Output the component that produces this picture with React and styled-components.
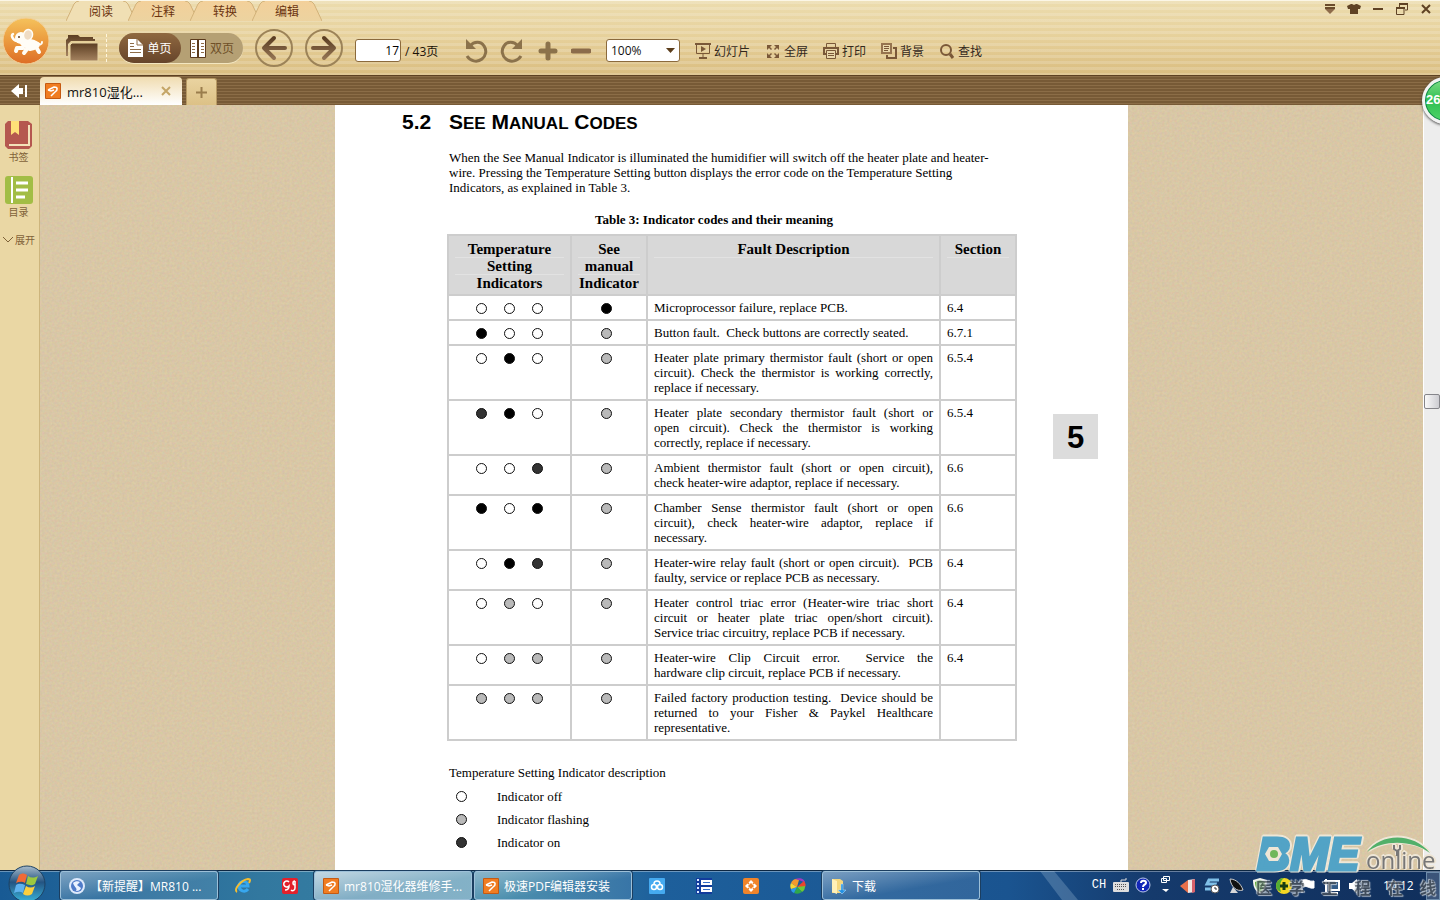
import React from 'react';
import styled, { createGlobalStyle, css } from 'styled-components';

const uiFont = '"Open Sans", "Noto Sans CJK SC", sans-serif';

const GlobalStyle = createGlobalStyle`
  * { box-sizing: border-box; }
  body { margin: 0; font-family: ${uiFont}; font-size: 12px; }
  button { border: 0; padding: 0; background: none; font: inherit; color: inherit; cursor: pointer; }
  svg { display: block; flex: none; }
  p, h1, h2, ul { margin: 0; padding: 0; }
`;

const Window = styled.div`
  position: relative;
  display: flex;
  flex-direction: column;
  height: 100vh;
  overflow: hidden;
`;

/* ---------- top toolbar ---------- */

const Header = styled.header`
  display: flex;
  flex: none;
  height: 75px;
  border-top: 1px solid #fbf6e6;
  background:
    repeating-linear-gradient(rgba(255, 255, 255, 0.16) 0 3px, transparent 3px 6px),
    linear-gradient(#ecdcae, #e6d09a 50%, #dabd80);
`;

const LogoButton = styled.button`
  display: flex;
  justify-content: center;
  align-items: center;
  width: 52px;
  height: 80px;
`;

const HeaderMain = styled.div`
  display: flex;
  flex: 1;
  flex-direction: column;
  padding-left: 14px;
`;

const MenuRow = styled.div`
  display: flex;
  justify-content: space-between;
  height: 20px;
`;

const MenuTabs = styled.nav`
  display: flex;
`;

const MenuTab = styled.button`
  display: grid;
  place-items: center;
  width: 70px;
  height: 20px;
  margin-right: -8px;
  color: #6b3410;

  > * { grid-area: 1 / 1; }
`;

const WindowButtons = styled.div`
  display: flex;
  align-items: center;
  gap: 8px;
  height: 16px;
  padding-right: 6px;

  button { display: grid; place-items: center; width: 16px; }
`;

const ToolRow = styled.div`
  display: flex;
  align-items: center;
  gap: 12px;
  height: 54px;
`;

const OpenButton = styled.button`
  width: 41px;
  height: 28px;
  border-right: 1px dashed #fff6dc;
`;

const ModeSwitch = styled.div`
  display: flex;
  width: 124px;
  height: 30px;
  border-radius: 15px;
  background: #b5a074;
  box-shadow: 0 1px 0 #f3e6c0;
`;

const ModeButton = styled.button`
  display: flex;
  align-items: center;
  justify-content: center;
  gap: 4px;
  width: 62px;
  border-radius: 15px;
  color: #6f5028;

  ${(p) => p.$active && css`
    color: #fff;
    background: linear-gradient(#8f6840, #66442a);
  `}
`;

const RoundButton = styled.button`
  display: grid;
  place-items: center;
  width: 38px;
  height: 38px;
  border: 2px solid #9c8358;
  border-radius: 50%;
`;

const ToolGroup = styled.div`
  display: flex;
  align-items: center;
  gap: 15px;
  padding-top: 5px;
`;

const PageField = styled.label`
  display: flex;
  align-items: center;
  gap: 4px;
  width: 95px;
  color: #1b1208;
  white-space: nowrap;

  input {
    width: 46px;
    height: 23px;
    padding: 0 1px;
    border: 1px solid #8b6a3c;
    border-radius: 3px;
    font: 12px ${uiFont};
    text-align: right;
  }
`;

const IconPair = styled.div`
  display: flex;
  gap: ${(p) => p.$gap}px;
`;

const ZoomField = styled.label`
  display: grid;
  align-items: center;
  width: 74px;

  > * { grid-area: 1 / 1; }

  select {
    height: 23px;
    padding: 0 4px;
    appearance: none;
    border: 1px solid #8b6a3c;
    border-radius: 3px;
    background: #fff;
    color: #111;
    font: 12px ${uiFont};
  }

  svg { justify-self: end; margin-right: 5px; pointer-events: none; }
`;

const ActionButton = styled.button`
  display: flex;
  align-items: center;
  gap: 3px;
  color: #33281c;
  white-space: nowrap;
`;

/* ---------- document tabs ---------- */

const TabBar = styled.div`
  display: flex;
  flex: none;
  align-items: flex-end;
  height: 30px;
  border-top: 1px solid #5d4122;
  background: repeating-linear-gradient(#8b6d47 0 1px, #775a36 1px 3px);
`;

const CollapseButton = styled.button`
  display: grid;
  place-items: center;
  width: 40px;
  height: 29px;
`;

const DocTab = styled.div`
  display: flex;
  align-items: center;
  gap: 6px;
  width: 142px;
  height: 28px;
  padding: 0 11px 0 5px;
  border-radius: 4px 4px 0 0;
  background: linear-gradient(#f0dcb0, #fff);
  color: #111;
  font-size: 13px;

  span { flex: 1; white-space: nowrap; }
`;

const NewTab = styled.button`
  display: grid;
  place-items: center;
  width: 31px;
  height: 27px;
  margin-left: 4px;
  border: 1px solid #b89a64;
  border-bottom: 0;
  border-radius: 3px 3px 0 0;
  background: linear-gradient(#e9d3a0, #dcc186);
`;

/* ---------- body ---------- */

const Body = styled.div`
  display: flex;
  flex: 1;
  min-height: 0;
`;

const Sidebar = styled.aside`
  display: flex;
  flex: none;
  flex-direction: column;
  align-items: center;
  gap: 10px;
  width: 40px;
  padding: 16px 2px 0 0;
  border-right: 1px solid #cdb57d;
  background: #ead7a4;
`;

const SideButton = styled.button`
  display: flex;
  flex-direction: column;
  align-items: center;
  height: 45px;
  color: #7f6238;
  font-size: 10px;
  line-height: 14px;
`;

const ExpandButton = styled.button`
  display: flex;
  align-items: center;
  gap: 1px;
  color: #7f6238;
  font-size: 10px;
  line-height: 18px;
  white-space: nowrap;
`;

const Canvas = styled.main`
  display: grid;
  grid-template-rows: 100%;
  justify-items: center;
  flex: 1;
  min-width: 0;
  overflow: hidden;
  background: #d9c8a5;

  > * { grid-area: 1 / 1; }
`;

const Paper = styled.article`
  display: flex;
  justify-content: space-between;
  width: 100%;
  max-width: 793px;
  padding: 5px 30px 0 67px;
  background: #fff;
  color: #000;
  font: 13px/15px "Liberation Serif", serif;
`;

const Section = styled.section`
  display: grid;
  grid-template-columns: 47px 567px;
  align-content: start;

  > * { grid-column: 2; }
`;

const Heading = styled.h1`
  display: grid;
  grid-column: 1 / -1;
  grid-template-columns: subgrid;
  font: bold 21px/24px "Liberation Sans", sans-serif;

  small { font-size: 17px; }
`;

const Intro = styled.p`
  margin-top: 14px;
  white-space: pre-line;
`;

const FaultTable = styled.table`
  width: 568px;
  margin-left: -2px;
  border-collapse: collapse;
  table-layout: fixed;

  caption {
    padding: 17px 36px 6px 0;
    font-weight: bold;
    line-height: 16px;
  }

  th {
    padding: 5px 6px 2px;
    border: 2px solid #cdcdcd;
    background: #d8d8d8;
    font-size: 15px;
    line-height: 17px;
    vertical-align: top;
  }

  th span {
    display: block;
    box-shadow: inset 0 -1px #e2e2e2;
  }

  td {
    padding: 4px 6px;
    border: 2px solid #cdcdcd;
    vertical-align: top;
  }
`;

const Line = styled.span`
  display: block;
  white-space: pre-wrap;
  text-align-last: ${(p) => (p.$last ? 'left' : 'justify')};
`;

const Lamps = styled.div`
  display: flex;
  justify-content: center;
  gap: 17px;
  padding: 3px ${(p) => (p.$single ? 5 : 0)}px 0 0;
`;

const lampColors = { off: '#fff', flash: '#b9b9b9', on: '#000', dark: '#333' };

const Lamp = styled.i`
  flex: none;
  width: 11px;
  height: 11px;
  border: 1px solid #111;
  border-radius: 50%;
  background: ${(p) => lampColors[p.$state]};
`;

const LegendTitle = styled.p`
  margin-top: 24px;
`;

const Legend = styled.ul`
  margin-top: 5px;
  list-style: none;

  li {
    display: flex;
    align-items: center;
    gap: 30px;
    height: 23px;
    padding-left: 7px;
  }
`;

const Chapter = styled.div`
  width: 45px;
  height: 45px;
  margin-top: 304px;
  background: #dcdcdc;
  font: bold 31px/48px "Liberation Sans", sans-serif;
  text-align: center;
`;

const ScrollTrack = styled.div`
  flex: none;
  width: 17px;
  padding-top: 289px;
  border-left: 1px solid #fff;
  background: #ededed;
`;

const ScrollThumb = styled.div`
  height: 15px;
  border: 1px solid #85858a;
  border-radius: 2px;
  background: linear-gradient(90deg, #fafafa, #cdcdd2);
`;

const FloatBadge = styled.div`
  position: absolute;
  top: 77px;
  right: -29px;
  width: 47px;
  height: 47px;
  border: 3px solid #f3f3f3;
  border-radius: 50%;
  background: linear-gradient(#7ddc84, #2fbf52 50%, #4fd468);
  box-shadow: inset 0 0 0 1px #12824a, 0 1px 3px #444;
  color: #fff;
  font: bold 13px/40px "Liberation Sans", sans-serif;
  text-indent: 1px;
`;

/* ---------- taskbar ---------- */

const Taskbar = styled.footer`
  display: flex;
  flex: none;
  gap: 2px;
  height: 30px;
  border-top: 1px solid #0d2742;
  background:
    linear-gradient(rgba(255, 255, 255, 0.35) 0 1px, transparent 1px),
    linear-gradient(90deg, #185a94, #32789f 18%, #3883a5 35%, #1d5f9b 46%, #1a5490 70%, #153a6c 80%, #102f5c);
`;

const StartButton = styled.button`
  display: grid;
  place-items: center;
  width: 58px;
  padding-right: 4px;
`;

const TaskButton = styled.button`
  display: flex;
  align-items: center;
  gap: 5px;
  width: 158px;
  height: 29px;
  padding: 0 8px;
  overflow: hidden;
  border: 1px solid #9dc0d8;
  border-radius: 3px;
  background: linear-gradient(170deg, rgba(255, 255, 255, ${(p) => (p.$active ? 0.7 : 0.42)}), rgba(255, 255, 255, ${(p) => (p.$active ? 0.38 : 0.1)}) 60%);
  box-shadow: 0 0 0 1px #1b3e60;
  color: #fff;
  white-space: nowrap;
`;

const QuickButton = styled.button`
  display: grid;
  place-items: center;
  width: 45px;
`;

const Tray = styled.div`
  display: flex;
  align-items: center;
  margin-left: auto;
  color: #fff;

  button { display: grid; place-items: center; width: 24px; }
`;

const Glare = styled.svg`
  margin-right: 8px;
`;

const LanguageBar = styled.div`
  display: flex;
  align-items: center;
  padding: 0 0 2px;
  font-family: "Liberation Mono", monospace;

  button { width: 22px; }
`;

const Clock = styled.time`
  width: 58px;
  padding-left: 15px;
`;

const ShowDesktop = styled.button`
  && { width: 14px; height: 28px; border: 1px solid #6d8cab; background: rgba(255, 255, 255, 0.18); }
`;

const Watermark = styled.div`
  position: absolute;
  right: 4px;
  bottom: 2px;
  width: 180px;
  pointer-events: none;
`;

const Brand = styled.div`
  display: flex;
  align-items: flex-end;
  height: 40px;
  filter: drop-shadow(1px 1px 0 #eee6d6) drop-shadow(-1px -1px 0 #eee6d6) drop-shadow(1px -1px 0 #eee6d6);

  svg { overflow: visible; }
`;

const BrandText = styled.div`
  display: flex;
  justify-content: space-between;
  color: #4b535b;
  font: bold 16px/22px "Noto Sans CJK SC", sans-serif;
  text-shadow: 0 0 1px #cfd6dc, 1px 1px 1px #cfd6dc, -1px -1px 1px #cfd6dc;
  opacity: 0.8;
`;

/* ---------- icons ---------- */

const ElephantLogo = () => (
  <svg width="48" height="48" viewBox="0 0 48 48">
    <defs>
      <linearGradient id="orb" x1="0" y1="0" x2="0" y2="1">
        <stop offset="0" stopColor="#f5c25c" />
        <stop offset=".5" stopColor="#eb9a3e" />
        <stop offset="1" stopColor="#dd6d26" />
      </linearGradient>
    </defs>
    <circle cx="24" cy="24" r="23" fill="url(#orb)" stroke="#f2cf96" />
    <g fill="none" stroke="#fffdf7" strokeLinecap="round" strokeLinejoin="round">
      <path d="M11 17c-2 1-1 6 4 7" strokeWidth="2.5" />
      <path d="M21 31l-6 0-1 3M25 32l-3 4M34 30l3 5M32 31l-4 1" strokeWidth="4" />
      <path d="M36 26c2 2 4 2 4-1" strokeWidth="2" />
    </g>
    <ellipse cx="19" cy="21" rx="6" ry="6" fill="#fffdf7" />
    <ellipse cx="28" cy="27" rx="10" ry="5" fill="#fffdf7" transform="rotate(8 28 27)" />
    <ellipse cx="26" cy="18" rx="4.5" ry="5.5" fill="#efdcc4" stroke="#fffdf7" strokeWidth="1.5" transform="rotate(15 26 18)" />
    <circle cx="17" cy="20" r="1" fill="#684020" />
  </svg>
);

const FolderIcon = () => (
  <svg width="33" height="28" viewBox="0 0 33 28">
    <defs>
      <linearGradient id="folder" x1="0" y1="0" x2="0" y2="1">
        <stop offset="0" stopColor="#5b3d22" />
        <stop offset="1" stopColor="#a58360" />
      </linearGradient>
    </defs>
    <path d="M0 22V6l2-2V1h10l2 2h13v2h2v2H5L2 10v12z" fill="url(#folder)" />
    <path d="M4 11l2-2h26v18H4z" fill="url(#folder)" stroke="#e8d4a2" />
  </svg>
);

const SinglePageIcon = () => (
  <svg width="15" height="18" viewBox="0 0 15 18">
    <path d="M0 0h9l6 6v12H0z" fill="#fff" />
    <path d="M9 0v6h6M2 4.5h4M2 7.5h4M2 10.5h11M2 13.5h11" fill="none" stroke="#8f6d48" />
  </svg>
);

const DoublePageIcon = () => (
  <svg width="16" height="19" viewBox="0 0 16 19">
    <path d="M.5.5h15v18H.5z" fill="#fff" stroke="#5b3a1c" />
    <path d="M8 0v19" stroke="#5b3a1c" strokeWidth="2" />
    <path d="M2 4.5h3M2 7.5h3M2 10.5h3M2 13.5h3M11 4.5h3M11 7.5h3M11 10.5h3M11 13.5h3" stroke="#8f6d48" />
  </svg>
);

const ArrowIcon = ({ flip }) => (
  <svg width="26" height="26" viewBox="0 0 26 26">
    <defs>
      <linearGradient id="arrow" gradientUnits="userSpaceOnUse" x1="0" y1="0" x2="0" y2="26">
        <stop offset="0" stopColor="#54371d" />
        <stop offset="1" stopColor="#9a7a58" />
      </linearGradient>
    </defs>
    <path d="M13 3L3 13l10 10M4 13h20" fill="none" stroke="url(#arrow)" strokeWidth="4" strokeLinecap="round" strokeLinejoin="round" transform={flip ? 'matrix(-1 0 0 1 26 0)' : undefined} />
  </svg>
);

const RotateIcon = ({ flip }) => (
  <svg width="24" height="24" viewBox="0 0 24 24">
    <g transform={flip ? 'matrix(-1 0 0 1 24 0)' : undefined} fill="none" stroke="#8b724b">
      <path d="M5 7c4-5 11-5 14 0 3 4 2 10-2 13-5 4-12 2-15-3" strokeWidth="3" />
      <path d="M1 0v10h10z" fill="#8b724b" stroke="none" />
    </g>
  </svg>
);

const PlusIcon = () => (
  <svg width="20" height="20" viewBox="0 0 20 20">
    <path d="M10 3v14M3 10h14" stroke="#8b724b" strokeWidth="5" strokeLinecap="round" />
  </svg>
);

const MinusIcon = () => (
  <svg width="20" height="20" viewBox="0 0 20 20">
    <path d="M2 10h16" stroke="#8b6c4b" strokeWidth="5" strokeLinecap="round" />
  </svg>
);

const actionIcons = {
  slides: (
    <g>
      <path d="M0 1h16" stroke="#7a5838" strokeWidth="2" />
      <path d="M1.5 2v8.5h13V2M8 11v4" fill="none" stroke="#7a5838" />
      <path d="M6 3l5 3-5 3z M4 14h8v2H4z" fill="#7a5838" />
    </g>
  ),
  full: (
    <g fill="#7a5838">
      <path d="M2 2h5L5 4l2 2-1 1-2-2-2 2zM14 2v5l-2-2-2 2-1-1 2-2-2-2zM14 15H9l2-2-2-2 1-1 2 2 2-2zM2 15v-5l2 2 2-2 1 1-2 2 2 2z" />
    </g>
  ),
  print: (
    <g fill="none" stroke="#7a5838">
      <path d="M3.5 4V.5h9V4" />
      <path d="M4 11H1V5h14v6h-3" strokeWidth="2" />
      <path d="M3.5 7.5h9v8h-9zM5 10.5h6M5 12.5h6" fill="#ead8ab" />
    </g>
  ),
  background: (
    <g fill="none" stroke="#7a5838">
      <path d="M12 5h3v10H6v-3" strokeWidth="2" />
      <path d="M1 1h9v9H1z" stroke="#96744f" strokeWidth="2" fill="#ead8ab" />
      <path d="M3 3.5h5M3 5.5h5M3 7.5h4" />
    </g>
  ),
  find: (
    <g fill="none" stroke="#7a5838">
      <circle cx="7" cy="7" r="5" strokeWidth="2" />
      <path d="M11 11l3 4" strokeWidth="3" />
    </g>
  ),
};

const PdfIcon = () => (
  <svg width="16" height="16" viewBox="0 0 16 16">
    <rect width="16" height="16" rx="1" fill="#c55a12" />
    <rect x="1" y="1" width="14" height="14" fill="#f07d22" />
    <path d="M3 7l6-3c4 0 4 3 1 5l-4 4M3 7l3 1 3-1" fill="none" stroke="#fff" strokeWidth="1.5" />
  </svg>
);

const WindowsOrb = () => (
  <svg width="36" height="30" viewBox="0 0 36 30" overflow="visible">
    <defs>
      <linearGradient id="start" x1="0" y1="0" x2="0" y2="1">
        <stop offset="0" stopColor="#a9bccb" />
        <stop offset=".45" stopColor="#245482" />
        <stop offset="1" stopColor="#39b3da" />
      </linearGradient>
    </defs>
    <circle cx="18" cy="13" r="18" fill="url(#start)" stroke="#1d4263" />
    <path d="M10 4c3-2 5-2 8 0l-2 8c-3-2-6-1-9 0z" fill="#f06a35" />
    <path d="M19 5c3 2 6 2 10 0l-3 8c-3 2-6 1-9 0z" fill="#9cc83f" />
    <path d="M7 14c3-2 6-1 9 0l-2 8c-3-2-6-1-9 0z" fill="#5fb2ef" />
    <path d="M17 15c3 2 6 2 9 0l-3 8c-3 2-6 2-9 0z" fill="#fbcf3e" />
  </svg>
);

const appIcons = {
  sync: (
    <g>
      <circle cx="8" cy="8" r="8" fill="#dde9fb" />
      <circle cx="8" cy="8" r="6" fill="#4f7bc9" />
      <path d="M4 5c2-2 5-2 7-1L8 7l4 3c-1 3-4 3-5 3 2-3-2-4-3-8z" fill="#eaf2ff" />
    </g>
  ),
  explorer: (
    <g fill="none">
      <path d="M13 11c-3 4-9 2-9-3 0-6 9-6 9 0H5" stroke="#37a7ee" strokeWidth="3" />
      <path d="M2 14C-2 12 6 2 13 1c3 0 2 2 1 4" stroke="#f3bd32" strokeWidth="2" />
    </g>
  ),
  music: (
    <g>
      <rect width="16" height="16" rx="2" fill="#e3202b" />
      <path d="M7 4a3 3 0 1 0 0 4c0 3-1 4-4 4M13 3a2 2 0 1 0 0 4M13 3v7c0 3-3 3-4 2" fill="none" stroke="#fff" strokeWidth="1.5" />
    </g>
  ),
  cloud: (
    <g>
      <rect width="16" height="16" rx="1" fill="#45aaf0" />
      <g fill="none" stroke="#fff" strokeWidth="1.5">
        <path d="M5 6a3 3 0 0 1 6 0" /><circle cx="5" cy="9" r="2.5" /><circle cx="11" cy="9" r="2.5" />
      </g>
    </g>
  ),
  film: (
    <g>
      <path d="M0 0h16v16H0z" fill="#123c9c" />
      <path d="M5 2h11v5H5zM5 9h11v5H5z" fill="#fff" />
      <path d="M2 1v14" stroke="#d7e7ff" strokeWidth="2" strokeDasharray="2 2" />
      <path d="M7 4.5h7M7 11.5h7" stroke="#356ec7" />
    </g>
  ),
  flow: (
    <g>
      <rect width="16" height="16" rx="2" fill="#f0842a" />
      <path d="M8 2l6 6-6 6-6-6z" fill="#fff" />
      <path d="M8 5l3 3-3 3-3-3z" fill="#f0842a" />
      <path d="M4 4l2 2M12 4l-2 2M12 12l-2-2M4 12l2-2" stroke="#f0842a" strokeWidth="1.5" />
    </g>
  ),
  ball: (
    <g>
      <path d="M7 9L1 5c2-4 5-5 8-3z" fill="#f49a2c" />
      <path d="M5 1c5-2 10 0 10 4-2-2-6-3-10-4z" fill="#a03ac2" />
      <path d="M7 9l7-6c2 3 2 5 1 6z" fill="#e9452d" />
      <path d="M7 9l8-1c0 3-1 5-3 6z" fill="#6fc736" />
      <path d="M7 9l5 5c-3 2-5 2-8 1z" fill="#2fa84a" />
      <path d="M7 9l-3 6c-2-1-3-2-3-4z" fill="#2a9be8" />
      <path d="M7 9l-6 2c-1-2-1-4 0-6z" fill="#f8d532" />
    </g>
  ),
  downloads: (
    <g>
      <path d="M1 1h8l3 2v12H1z" fill="#f4d77e" />
      <path d="M1 1l5 2v13l-5-2z" fill="#fff0b8" />
      <path d="M10 6v6H7l4 4 4-4h-3V6z" fill="#2592e4" stroke="#bfe2fa" strokeWidth=".5" />
    </g>
  ),
  keyboard: (
    <g>
      <path d="M8 5V3h5V1" fill="none" stroke="#ddd" />
      <rect y="5" width="16" height="10" rx="1" fill="#dedede" />
      <path d="M2 7.5h12M2 9.5h12M4 12.5h8" stroke="#555" strokeDasharray="1 1" />
    </g>
  ),
  help: (
    <g>
      <circle cx="8" cy="8" r="7" fill="#1226b8" stroke="#b9c7e6" />
      <path d="M6 6c0-3 5-3 5 0 0 2-3 1-3 4M8 11v2" fill="none" stroke="#fff" strokeWidth="2" />
    </g>
  ),
  restore: (
    <g>
      <path d="M6.5-.5h6v4h-6zM4.5 1.5h5v4h-5z" fill="#174070" stroke="#fff" />
      <path d="M5 12h7l-3 3z" fill="#fff" />
    </g>
  ),
  eraser: (
    <g>
      <path d="M0 8l8-6v13z" fill="#e8704b" />
      <path d="M8 2l7-1v13l-7 1z" fill="#f3e6e2" />
      <path d="M12 2l3-1v13l-3 1z" fill="#d6616b" />
    </g>
  ),
  scheduler: (
    <g fill="none">
      <path d="M15 2H5L3 6h8l-2 5H1" stroke="#7fc0e8" strokeWidth="3" />
      <circle cx="11" cy="11" r="4" fill="#fff" stroke="#555" />
      <path d="M11 9v2h2" stroke="#333" />
    </g>
  ),
  satellite: (
    <g>
      <path d="M2 1c6 0 11 5 13 11-6 2-12-3-13-11z" fill="#111" stroke="#ccc" />
      <path d="M5 9l-3 6h8z" fill="#d9d9d9" />
    </g>
  ),
  shield: (
    <g>
      <path d="M8 0l7 2c0 7-2 11-7 14C3 13 1 9 1 2z" fill="#f4f7ee" />
      <path d="M8 2l5 2c0 5-2 8-5 10-3-2-5-5-5-10z" fill="#55a82e" />
    </g>
  ),
  guard: (
    <g>
      <circle cx="8" cy="8" r="8" fill="#f4d722" />
      <path d="M0 8a8 8 0 0 1 8-8c-4 3-5 8-3 14-3-1-5-3-5-6z" fill="#54ae35" />
      <path d="M8 4v8M4 8h8" stroke="#173c12" strokeWidth="3" />
    </g>
  ),
  flag: (
    <path d="M2 1v14M3 2c4-2 5 2 11 1v7c-5 1-7-3-11-1z" fill="#fff" stroke="#fff" />
  ),
  network: (
    <g>
      <path d="M5 3h10v9H5z" fill="#315a86" stroke="#fff" strokeWidth="2" />
      <path d="M2 1v13M0 3h4M7 15h7" stroke="#fff" strokeWidth="2" />
    </g>
  ),
  sound: (
    <g>
      <path d="M1 5h3l5-4v14l-5-4H1z" fill="#fff" />
      <path d="M11 5c2 2 2 4 0 6M13 3c3 3 3 7 0 10" fill="none" stroke="#d0dcea" />
    </g>
  ),
};

const Icon = ({ children }) => (
  <svg width="16" height="16" viewBox="0 0 16 16" overflow="visible">{children}</svg>
);

const TabShape = ({ active }) => (
  <svg width="70" height="20" viewBox="0 0 70 20">
    <defs>
      <linearGradient id="tab" x1="0" y1="0" x2="0" y2="1">
        <stop offset="0" stopColor="#f3d09a" />
        <stop offset="1" stopColor="#ecd3a0" />
      </linearGradient>
    </defs>
    <path d="M0 20L8 3q2-3 5-3h44q3 0 5 3l8 17z" fill={active ? '#f0dfb4' : 'url(#tab)'} />
    <path d="M0 20L8 3q2-3 5-3M57 0q3 0 5 3l8 17" fill="none" stroke="#d2b27a" />
  </svg>
);

/* ---------- data ---------- */

const menus = ['阅读', '注释', '转换', '编辑'];

const actions = [
  ['slides', '幻灯片'],
  ['full', '全屏'],
  ['print', '打印'],
  ['background', '背景'],
  ['find', '查找'],
];

const faults = [
  { lamps: ['off', 'off', 'off'], manual: 'on', section: '6.4', text: ['Microprocessor failure, replace PCB.'] },
  { lamps: ['on', 'off', 'off'], manual: 'flash', section: '6.7.1', text: ['Button fault.  Check buttons are correctly seated.'] },
  { lamps: ['off', 'on', 'off'], manual: 'flash', section: '6.5.4', text: ['Heater plate primary thermistor fault (short or open', 'circuit). Check the thermistor is working correctly,', 'replace if necessary.'] },
  { lamps: ['dark', 'on', 'off'], manual: 'flash', section: '6.5.4', text: ['Heater plate secondary thermistor fault (short or', 'open circuit). Check the thermistor is working', 'correctly, replace if necessary.'] },
  { lamps: ['off', 'off', 'dark'], manual: 'flash', section: '6.6', text: ['Ambient thermistor fault (short or open circuit),', 'check heater-wire adaptor, replace if necessary.'] },
  { lamps: ['on', 'off', 'on'], manual: 'flash', section: '6.6', text: ['Chamber Sense thermistor fault (short or open', 'circuit), check heater-wire adaptor, replace if', 'necessary.'] },
  { lamps: ['off', 'on', 'dark'], manual: 'flash', section: '6.4', text: ['Heater-wire relay fault (short or open circuit).  PCB', 'faulty, service or replace PCB as necessary.'] },
  { lamps: ['off', 'flash', 'off'], manual: 'flash', section: '6.4', text: ['Heater control triac error (Heater-wire triac short', 'circuit or heater plate triac open/short circuit).', 'Service triac circuitry, replace PCB if necessary.'] },
  { lamps: ['off', 'flash', 'flash'], manual: 'flash', section: '6.4', text: ['Heater-wire Clip Circuit error.  Service the', 'hardware clip circuit, replace PCB if necessary.'] },
  { lamps: ['flash', 'flash', 'flash'], manual: 'flash', section: '', text: ['Failed factory production testing.  Device should be', 'returned to your Fisher & Paykel Healthcare', 'representative.'] },
];

const intro = `When the See Manual Indicator is illuminated the humidifier will switch off the heater plate and heater-
wire. Pressing the Temperature Setting button displays the error code on the Temperature Setting
Indicators, as explained in Table 3.`;

/* ---------- parts ---------- */

const TopBar = () => (
  <Header>
    <LogoButton aria-label="Menu"><ElephantLogo /></LogoButton>
    <HeaderMain>
      <MenuRow>
        <MenuTabs>
          {menus.map((name, i) => (
            <MenuTab key={name}>
              <TabShape active={i === 0} />
              <span>{name}</span>
            </MenuTab>
          ))}
        </MenuTabs>
        <WindowButtons>
          <button aria-label="More">
            <svg width="10" height="10"><path d="M0 1h10M0 4h10" stroke="#6b4c2c" strokeWidth="2" /><path d="M0 5h10L5 10z" fill="#8d6b4a" /></svg>
          </button>
          <button aria-label="Skin">
            <svg width="14" height="10"><path d="M4 0h1l2 1 2-1h1l4 2-1 3h-2v5H3V5H1L0 2z" fill="#5f4224" /></svg>
          </button>
          <button aria-label="Minimize">
            <svg width="10" height="10"><path d="M0 5h10" stroke="#5f4224" strokeWidth="2" /></svg>
          </button>
          <button aria-label="Restore">
            <svg width="12" height="12"><path d="M3.5 4V1h8v6H9M.5 5h7.5v6.5H.5z" fill="none" stroke="#5f4224" /><path d="M3 1h9M0 5h9" stroke="#5f4224" strokeWidth="2" /></svg>
          </button>
          <button aria-label="Close">
            <svg width="10" height="10"><path d="M1 1l8 8M9 1L1 9" stroke="#5f4224" strokeWidth="2" /></svg>
          </button>
        </WindowButtons>
      </MenuRow>
      <ToolRow>
        <OpenButton aria-label="Open"><FolderIcon /></OpenButton>
        <ModeSwitch>
          <ModeButton $active><SinglePageIcon />单页</ModeButton>
          <ModeButton><DoublePageIcon />双页</ModeButton>
        </ModeSwitch>
        <RoundButton aria-label="Previous page"><ArrowIcon /></RoundButton>
        <RoundButton aria-label="Next page"><ArrowIcon flip /></RoundButton>
        <ToolGroup>
          <PageField><input aria-label="Page" defaultValue="17" />/ 43页</PageField>
          <IconPair $gap={10}>
            <button aria-label="Rotate left"><RotateIcon /></button>
            <button aria-label="Rotate right"><RotateIcon flip /></button>
          </IconPair>
          <IconPair $gap={13}>
            <button aria-label="Zoom in"><PlusIcon /></button>
            <button aria-label="Zoom out"><MinusIcon /></button>
          </IconPair>
          <ZoomField>
            <select aria-label="Zoom" defaultValue="100%"><option>100%</option></select>
            <svg width="9" height="5"><path d="M0 0h9L4.5 5z" fill="#5b3d1c" /></svg>
          </ZoomField>
          {actions.map(([icon, label]) => (
            <ActionButton key={icon}><Icon>{actionIcons[icon]}</Icon>{label}</ActionButton>
          ))}
        </ToolGroup>
      </ToolRow>
    </HeaderMain>
  </Header>
);

const Tabs = () => (
  <TabBar>
    <CollapseButton aria-label="Collapse sidebar">
      <svg width="18" height="14"><path d="M0 7l8-7v4h4v6H8v4zM14 1h2v12h-2z" fill="#fff" /></svg>
    </CollapseButton>
    <DocTab>
      <PdfIcon />
      <span>mr810湿化...</span>
      <button aria-label="Close tab">
        <svg width="10" height="10"><path d="M1 1l8 8M9 1L1 9" stroke="#c4a566" strokeWidth="2" /></svg>
      </button>
    </DocTab>
    <NewTab aria-label="New tab">
      <svg width="11" height="11"><path d="M5.5 0v11M0 5.5h11" stroke="#9a7d4c" strokeWidth="2" /></svg>
    </NewTab>
  </TabBar>
);

const SideTools = () => (
  <Sidebar>
    <SideButton>
      <svg width="28" height="29" viewBox="0 0 28 29">
        <path d="M3 0h20l4 3v22l-3 3H3l-3-3V3z" fill="#b5584f" />
        <path d="M24 4v20H4" fill="none" stroke="#f3e2ba" strokeWidth="2" />
        <path d="M6 0h8v14l-4-3-4 3z" fill="#ffe078" />
      </svg>
      书签
    </SideButton>
    <SideButton>
      <svg width="28" height="29" viewBox="0 0 28 29">
        <rect width="28" height="28" rx="3" fill="#a2bd45" />
        <path d="M7 1v26" stroke="#fff" strokeWidth="2" />
        <path d="M11 7h12M11 14h12M11 21h9" stroke="#fff" strokeWidth="3" />
      </svg>
      目录
    </SideButton>
    <ExpandButton>
      <svg width="12" height="8"><path d="M1 1l5 5 5-5" fill="none" stroke="#7f6238" /></svg>
      展开
    </ExpandButton>
  </Sidebar>
);

const Backdrop = () => (
  <svg width="100%" height="100%" aria-hidden="true">
    <filter id="grain" colorInterpolationFilters="sRGB">
      <feTurbulence type="fractalNoise" baseFrequency=".4" numOctaves="2" />
      <feColorMatrix values=".08 0 0 0 .81  0 .08 0 0 .74  0 0 .08 0 .61  0 0 0 0 1" />
    </filter>
    <rect width="100%" height="100%" filter="url(#grain)" />
  </svg>
);

const Document = () => (
  <Paper>
    <Section>
      <Heading>
        <span>5.2</span>
        <span>S<small>EE</small> M<small>ANUAL</small> C<small>ODES</small></span>
      </Heading>
      <Intro>{intro}</Intro>
      <FaultTable>
        <caption>Table 3: Indicator codes and their meaning</caption>
        <colgroup>
          <col width="123" />
          <col width="76" />
          <col width="293" />
          <col width="76" />
        </colgroup>
        <thead>
          <tr>
            <th scope="col"><span>Temperature</span><span>Setting</span>Indicators</th>
            <th scope="col"><span>See</span><span>manual</span>Indicator</th>
            <th scope="col"><span>Fault Description</span></th>
            <th scope="col"><span>Section</span></th>
          </tr>
        </thead>
        <tbody>
          {faults.map((fault) => (
            <tr key={fault.text[0]}>
              <td><Lamps>{fault.lamps.map((state, i) => <Lamp key={i} $state={state} />)}</Lamps></td>
              <td><Lamps $single><Lamp $state={fault.manual} /></Lamps></td>
              <td>
                {fault.text.map((line, i) => (
                  <Line key={line} $last={i === fault.text.length - 1}>{line}</Line>
                ))}
              </td>
              <td>{fault.section}</td>
            </tr>
          ))}
        </tbody>
      </FaultTable>
      <LegendTitle>Temperature Setting Indicator description</LegendTitle>
      <Legend>
        <li><Lamp $state="off" />Indicator off</li>
        <li><Lamp $state="flash" />Indicator flashing</li>
        <li><Lamp $state="dark" />Indicator on</li>
      </Legend>
    </Section>
    <Chapter>5</Chapter>
  </Paper>
);

const Quick = ({ name }) => (
  <QuickButton aria-label={name}><Icon>{appIcons[name]}</Icon></QuickButton>
);

const BottomBar = () => (
  <Taskbar>
    <StartButton aria-label="Start"><WindowsOrb /></StartButton>
    <TaskButton><Icon>{appIcons.sync}</Icon>【新提醒】MR810 ...</TaskButton>
    <Quick name="explorer" />
    <Quick name="music" />
    <TaskButton $active><PdfIcon />mr810湿化器维修手...</TaskButton>
    <TaskButton><PdfIcon />极速PDF编辑器安装</TaskButton>
    <Quick name="cloud" />
    <Quick name="film" />
    <Quick name="flow" />
    <Quick name="ball" />
    <TaskButton><Icon>{appIcons.downloads}</Icon>下载</TaskButton>
    <Tray>
      <Glare width="40" height="29" aria-hidden="true">
        <path d="M0 0h14l24 29H22z" fill="#b9d3e8" opacity=".25" />
      </Glare>
      <LanguageBar>
        <button>CH</button>
        {['keyboard', 'help', 'restore'].map((name) => (
          <button key={name} aria-label={name}><Icon>{appIcons[name]}</Icon></button>
        ))}
      </LanguageBar>
      {['eraser', 'scheduler', 'satellite', 'shield', 'guard', 'flag', 'network', 'sound'].map((name) => (
        <button key={name} aria-label={name}><Icon>{appIcons[name]}</Icon></button>
      ))}
      <Clock>10:12</Clock>
      <ShowDesktop aria-label="Show desktop" />
    </Tray>
  </Taskbar>
);

const SiteMark = () => (
  <Watermark>
    <Brand>
      <svg width="180" height="40" viewBox="0 0 180 40">
        <text x="1" y="34" fontFamily="Liberation Sans" fontWeight="bold" fontStyle="italic" fontSize="46" fill="#52a3c6" stroke="#52a3c6" strokeWidth="3">BME</text>
        <path d="M12 4h14l-1 11-2 14H8z" fill="#52a3c6" />
        <path d="M13 11h9l4 7-4 7h-9l-4-7z" fill="#eee6d6" />
        <circle cx="18" cy="18" r="4" fill="#6fb75a" />
        <path d="M111 16C125-3 157-4 174 17 157 4 128 3 111 16z" fill="#52b06a" />
        <text x="110" y="33" fontFamily="Open Sans" fontSize="24" fill="#777">online</text>
        <path d="M138 9v4l3 2 3-2V9M141 15v5" fill="none" stroke="#777" strokeWidth="2" />
      </svg>
    </Brand>
    <BrandText>
      {['医', '学', '工', '程', '在', '线'].map((ch) => <span key={ch}>{ch}</span>)}
    </BrandText>
  </Watermark>
);

const App = () => {
  return (
    <Window>
      <GlobalStyle />
      <TopBar />
      <Tabs />
      <Body>
        <SideTools />
        <Canvas>
          <Backdrop />
          <Document />
        </Canvas>
        <ScrollTrack><ScrollThumb /></ScrollTrack>
      </Body>
      <BottomBar />
      <FloatBadge>26</FloatBadge>
      <SiteMark />
    </Window>
  );
}

export default App;
